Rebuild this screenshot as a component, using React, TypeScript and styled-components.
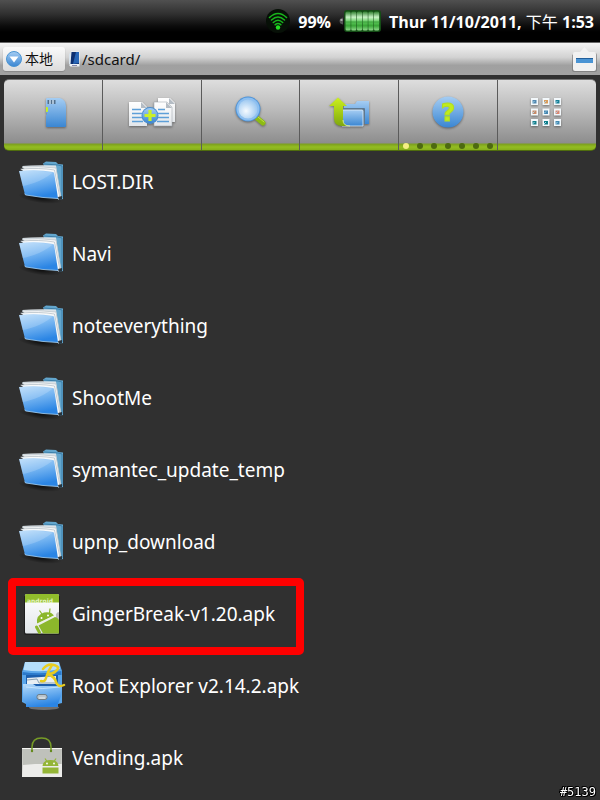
import React from "react";
import styled, { createGlobalStyle } from "styled-components";

const GlobalStyle = createGlobalStyle`
  * { box-sizing: border-box; }
  body {
    margin: 0;
    background: #303030;
    color: #fff;
    font-family: "Noto Sans", "Noto Sans CJK TC", sans-serif;
  }
  button { font: inherit; color: inherit; border: 0; padding: 0; background: none; cursor: pointer; }
`;

const Screen = styled.main`
  min-height: 100vh;
  display: flex;
  flex-direction: column;
  background: #303030;
`;

const StatusBar = styled.header`
  height: 42px;
  padding: 2px 6px 0 0;
  display: flex;
  align-items: center;
  justify-content: flex-end;
  gap: 8px;
  background: linear-gradient(#505050 0, #303030 14px, #0c0c0c 26px, #000 32px);
  font-family: "Open Sans", "Noto Sans CJK TC", sans-serif;
  font-size: 16px;
  font-weight: 700;
  line-height: 24px;
  white-space: nowrap;
  svg { display: block; flex: none; margin-bottom: 2px; }
`;

const Thin = styled.span`
  font-weight: 400;
`;

const PathBar = styled.nav`
  height: 33px;
  padding: 0 3px;
  display: flex;
  align-items: center;
  gap: 3px;
  border-top: 1px solid #666;
  background: linear-gradient(#f4f4f4, #d2d2d2 45%, #a0a0a0 70%, #a2a2a2);
  color: #111;
`;

const LocalButton = styled.button`
  && {
    width: 62px;
    height: 24px;
    padding: 0 3px;
    display: flex;
    align-items: center;
    gap: 3px;
    border-radius: 3px;
    background: linear-gradient(#fafafa, #dcdcdc);
    box-shadow: 0 1px 1px #888;
    font-size: 14px;
    line-height: 20px;
    white-space: nowrap;
  }
  svg { flex: none; }
`;

const CurrentPath = styled.span`
  flex: 1;
  display: flex;
  align-items: center;
  gap: 1px;
  font-size: 15px;
  line-height: 24px;
`;

const CollapseButton = styled.button`
  height: 26px;
  svg { display: block; }
`;

const Toolbar = styled.nav`
  position: relative;
  z-index: 1;
  margin: 4px 4px 0;
  height: 72px;
  display: flex;
  border-radius: 5px;
  overflow: hidden;
  border-top: 1px solid #777;
  border-bottom: 1px solid #4f6d0d;
  background: linear-gradient(#dedede, #b8b8b8 45%, #8d8d8d 63px, #7c9f1f 64px, #93bd22 67px, #86ad1b);
`;

const Tool = styled.button`
  && {
    flex: 1;
    min-width: 0;
    display: flex;
    flex-direction: column;
    align-items: center;
    justify-content: space-between;
    padding-top: 8px;
    border-right: 1px solid #5b5b5b;
  }
  &&:last-child { border-right: 0; }
  svg { display: block; filter: drop-shadow(0 1px 1px rgba(0, 0, 0, 0.4)); }
`;

const Dots = styled.span`
  display: flex;
  align-self: stretch;
  justify-content: space-between;
  padding: 0 4px;
`;

const Dot = styled.span<{ $on?: boolean }>`
  width: 6px;
  height: 6px;
  margin-bottom: 1px;
  border-radius: 50%;
  background: ${(p) => (p.$on ? "#f5ee84" : "#4d6a10")};
`;

const FileList = styled.ul`
  list-style: none;
  margin: -5px 0 0;
  padding: 0;
`;

const FileItem = styled.li`
  position: relative;
  height: 72px;
`;

const FileButton = styled.button`
  && {
    width: 100%;
    height: 100%;
    padding: 0 18px;
    display: flex;
    align-items: center;
    gap: 6px;
    text-align: left;
    font-size: 19px;
    line-height: 28px;
    font-weight: 400;
  }
  svg { flex: none; display: block; }
`;

const Highlight = styled.span`
  position: absolute;
  top: 0;
  left: 8px;
  width: 296px;
  height: 77px;
  border: 8px solid #fe0000;
  border-radius: 5px;
  pointer-events: none;
  z-index: 1;
`;

const Stamp = styled.small`
  position: fixed;
  right: 4px;
  bottom: 0;
  font-family: "DejaVu Sans Mono", monospace;
  font-size: 12px;
  line-height: 16px;
  text-shadow: 1px 0 #000, -1px 0 #000, 0 1px #000, 0 -1px #000, 1px 1px #000, -1px -1px #000;
`;

const Gradients = () => (
  <svg width="0" height="0" aria-hidden="true" display="block">
    <defs>
      <linearGradient id="blue" x1="0" y1="0" x2="0" y2="1">
        <stop offset="0" stopColor="#a5cdf3" />
        <stop offset="1" stopColor="#3a86d2" />
      </linearGradient>
      <linearGradient id="folder" x1="0" y1="0" x2="0.3" y2="1">
        <stop offset="0" stopColor="#b7dbfa" />
        <stop offset="0.45" stopColor="#79b7f2" />
        <stop offset="1" stopColor="#2b85e4" />
      </linearGradient>
      <linearGradient id="lime" x1="0" y1="0" x2="0" y2="1">
        <stop offset="0" stopColor="#cdf01f" />
        <stop offset="1" stopColor="#7fa80e" />
      </linearGradient>
      <linearGradient id="paper" x1="0" y1="0" x2="0" y2="1">
        <stop offset="0" stopColor="#ffffff" />
        <stop offset="1" stopColor="#e2e6ea" />
      </linearGradient>
      <linearGradient id="cell" x1="0" y1="0" x2="0" y2="1">
        <stop offset="0" stopColor="#2c7d2c" />
        <stop offset="0.3" stopColor="#c8f2c5" />
        <stop offset="0.55" stopColor="#5cc85a" />
        <stop offset="0.75" stopColor="#38a436" />
        <stop offset="1" stopColor="#8fdc8b" />
      </linearGradient>
      <radialGradient id="lens" cx="0.4" cy="0.6" r="0.7">
        <stop offset="0" stopColor="#f6fbff" />
        <stop offset="1" stopColor="#8fc0ee" />
      </radialGradient>
      <radialGradient id="shade">
        <stop offset="0" stopColor="#000" stopOpacity="0.7" />
        <stop offset="1" stopColor="#000" stopOpacity="0" />
      </radialGradient>
    </defs>
  </svg>
);

const WifiIcon = () => (
  <svg width="24" height="24" viewBox="0 0 24 24" fill="none" stroke="#18b51c" strokeWidth="1.6" strokeLinecap="round">
    <circle cx="12" cy="12" r="12" fill="#071007" stroke="none" />
    <path d="M3.5 8.5Q12 .5 20.500 8.500" />
    <path d="M5.500 11Q12 5 18.500 11" />
    <path d="M7.300 13.500Q12 9 16.700 13.500" />
    <path d="M9.200 15.700Q12 13.300 14.800 15.700" />
    <circle cx="12" cy="18.500" r="2.200" fill="#22e022" stroke="none" />
  </svg>
);

const BatteryIcon = () => (
  <svg width="42" height="22" viewBox="0 0 42 22">
    <path d="M4 7.500Q.5 8 .5 11T4 14.500Z" fill="#555" />
    <rect x="1.500" y="9" width="2" height="2" fill="#aaa" />
    <rect x="5" y="0" width="37" height="22" rx="3" fill="#154d16" />
    {[0, 1, 2, 3, 4, 5].map((i) => (
      <rect key={i} x={6.5 + i * 5.7} y="1.500" width="5.200" height="19" rx="1.500" fill="url(#cell)" />
    ))}
    <path d="M6 12h35" stroke="#2a882a" strokeWidth="1.500" opacity=".4" />
  </svg>
);

const DownIcon = () => (
  <svg width="16" height="16" viewBox="0 0 16 16">
    <circle cx="8" cy="8" r="7.500" fill="url(#blue)" stroke="#4b94d2" />
    <path d="M3.500 5.500h9L8 11.500Z" fill="#fff" />
  </svg>
);

const PhoneIcon = () => (
  <svg width="13" height="16" viewBox="0 0 13 16">
    <path d="M1 3 3 1v13l-2-1Z" fill="#d8e3ed" />
    <path d="M3 .5h8q.5 0 .5.5v14q0 .5-.5.5H2.500L1 14l1.500-1Z" fill="#eef3f7" />
    <path d="M3.500 1H11v12H2.500Z" fill="#0c2f70" />
    <path d="M8 1h3v11L5 13Z" fill="#2865b5" />
    <path d="M4 14.500h5" stroke="#88a" />
  </svg>
);

const CollapseIcon = () => (
  <svg width="25" height="26" viewBox="0 0 25 26">
    <path d="M3 7h20q2 0 2 2v15q0 2-2 2H3q-3 0-3-2V9Z" fill="#6f6f6f" opacity=".6" />
    <path d="M3 6h5l4.500-5L17 6h5q2 0 2 2v15q0 2-2 2H3q-2 0-2-2V8q0-2 2-2Z" fill="#f1f1f1" />
    <rect x="4" y="12" width="17" height="5" fill="#4a94d4" />
    <path d="M4 12.500h17" stroke="#225f9a" />
  </svg>
);

const SdIcon = () => (
  <svg width="48" height="48" viewBox="0 0 48 48">
    <path d="M18 10h13q6 2 6 8v20q0 1-1 1H18q-1 0-1-1V27l1-1-1-2V11q0-1 1-1Z" fill="url(#blue)" />
    <path d="M19.500 12v4M22.500 12v4M25.500 12v4" stroke="#53708c" strokeWidth="2" />
    <path d="M21 12v4M24 12v4" stroke="#e0e8ef" strokeWidth="1" />
    <path d="M17 19h1q1 0 1 1v3q0 1-1 1h-1Z" fill="#c4ee26" />
  </svg>
);

const CopyIcon = () => (
  <svg width="48" height="48" viewBox="0 0 48 48">
    <path d="M30 10h12l5 5v19H30Z" fill="url(#paper)" />
    <path d="M41 10v6h6Z" fill="#b4bcc4" />
    <path d="M1 14h13l5 5v19H1Z" fill="url(#paper)" />
    <path d="M13 14v6h6Z" fill="#b4bcc4" />
    <path d="M26 14h13l5 5v19H26Z" fill="url(#paper)" stroke="#a6acb2" strokeWidth=".6" />
    <path d="M38 14v6h6Z" fill="#b4bcc4" />
    <path d="M4 21.500h9M4 25.500h10M4 29.500h10M4 33.500h11M30 21.500h7M29 25.500h12M29 29.500h12M29 33.500h12" stroke="#5d9fd8" strokeWidth="1.500" />
    <circle cx="22" cy="27.500" r="8.500" fill="#4c90cf" />
    <circle cx="22" cy="27.500" r="7.500" fill="url(#blue)" />
    <path d="M22 22v11M16.500 27.500h11" stroke="#caf029" strokeWidth="3.200" />
  </svg>
);

const SearchIcon = () => (
  <svg width="48" height="48" viewBox="0 0 48 48">
    <path d="m30 30 6 5" stroke="#8dbb13" strokeWidth="5" strokeLinecap="round" />
    <path d="m31 29 6 5" stroke="#c0e240" strokeWidth="1" strokeLinecap="round" />
    <circle cx="21" cy="21" r="12.500" fill="#4f96dc" />
    <circle cx="21" cy="21" r="11.500" fill="#8dbff0" />
    <circle cx="21" cy="21" r="9.500" fill="url(#lens)" />
  </svg>
);

const UpIcon = () => (
  <svg width="48" height="48" viewBox="0 0 48 48">
    <path d="M19 16h11l2-3h12v23H19Z" fill="url(#blue)" />
    <path d="M18 20h21q1 0 1 1v15H18Z" fill="#5e7890" />
    <path d="M17 22h20q1 0 1 1v15H17Z" fill="url(#blue)" stroke="#e1effb" strokeWidth=".8" />
    <path d="M13 9.500 22 18h-4v14q0 6 7 6H17q-8 0-8-8V18H4Z" fill="url(#lime)" />
    <path d="M18 32q0 6 7 6" fill="none" stroke="#eafa92" strokeWidth=".8" />
  </svg>
);

const HelpIcon = () => (
  <svg width="48" height="48" viewBox="0 0 48 48">
    <circle cx="24" cy="24" r="15.500" fill="url(#blue)" />
    <text x="24" y="33" textAnchor="middle" fontFamily="DejaVu Sans" fontWeight="700" fontSize="25" fill="#c0ec1c" stroke="#b2dc22" strokeWidth="1">?</text>
  </svg>
);

const tileColors = ["#5287b0", "#d99b5b", "#168097", "#c88a68", "#4686b0", "#d98773", "#15808b", "#0b7c88", "#4489b2"];

const AppsIcon = () => (
  <svg width="48" height="48" viewBox="0 0 48 48">
    {tileColors.map((color, i) => {
      const x = 8 + (i % 3) * 11.5;
      const y = 10 + Math.floor(i / 3) * 10.5;
      return (
        <g key={i}>
          <rect x={x} y={y} width="7" height="7" fill="#f3f8fb" />
          <rect x={x + 1.5} y={y + 2} width="4" height="3.500" fill={color} />
          <path d={`M${x + 1.5} ${y + 5}l2-2`} stroke="#a9d8ed" />
        </g>
      );
    })}
  </svg>
);

const FolderIcon = () => (
  <svg width="48" height="48" viewBox="0 0 48 48">
    <ellipse cx="22" cy="40" rx="22" ry="5" fill="url(#shade)" transform="rotate(8 22 40)" />
    <path d="M25 5.500 28 3.500 38 4l2 2 5 .5V41l-4 1Z" fill="#63a6cd" />
    <path d="M26 6l14 1 4 1v32" fill="none" stroke="#3c7fa9" />
    <path d="M4 8q12-1 34-.500L43 39l-2 3Z" fill="#dce3e8" />
    <path d="M4 9q16-1 34 1L43 40l-2 1Z" fill="#f9fafb" stroke="#adb8c0" strokeWidth=".6" />
    <path d="M2.500 11Q22 9.500 36.500 12L42 40" fill="#f7f9fa" stroke="#a5b0b8" strokeWidth=".6" />
    <path d="M1 13Q20 11 35 14 36 14 36.200 15.500L40 40.500Q24 40 8 37 7 37 6.700 35.500Z" fill="url(#folder)" />
    <path d="M1.500 13.500Q20 11.500 35 14.500 25 22 16 25T4.500 28Z" fill="#fff" opacity=".18" />
    <path d="M6.800 35.500Q7 37 8 37 24 40 40 40.500" fill="none" stroke="#a7d5fb" strokeWidth=".8" />
    <path d="m40 39 4-1v3.500l-3 .5Z" fill="#27333c" />
  </svg>
);

const ApkIcon = () => (
  <svg width="48" height="48" viewBox="0 0 48 48">
    <rect x="6" y="5" width="36" height="40" rx="2" fill="#000" opacity=".35" />
    <rect x="7" y="4" width="34" height="39.500" rx="1.500" fill="url(#paper)" />
    <path d="M7 12.500V5.500Q7 4 8.500 4h31Q41 4 41 5.500v7Z" fill="#91bd2c" />
    <text x="22" y="13" textAnchor="middle" fontFamily="DejaVu Sans" fontSize="6" fontWeight="700" fill="#e5f5c4">android</text>
    <path d="m38 24 2-2q1 0 1 1v8l-3-2Z" fill="#bbb" />
    <path d="M19 33.500Q18 25 26 22.500 33 21 36 25.500Z" fill="#8cb72b" />
    <path d="m21.500 20.500 2.500 3.500m8-5.500-.5 4.500" stroke="#8cb72b" strokeWidth="1.200" />
    <path d="M20.500 35.500 37 27q2 0 4 3v13.500H25Z" fill="#8cb72b" />
    <path d="m18.500 37 3 5.500" stroke="#8cb72b" strokeWidth="3" strokeLinecap="round" />
    <path d="m19 34.500 17-8.500" stroke="#eef5df" />
    <circle cx="23.500" cy="28" r="1" fill="#fff" />
    <circle cx="30" cy="25.500" r="1" fill="#fff" />
  </svg>
);

const RootExplorerIcon = () => (
  <svg width="48" height="48" viewBox="0 0 48 48">
    <ellipse cx="26" cy="45.500" rx="15" ry="2.500" fill="#999" opacity=".6" />
    <path d="M7 0h34l3 9v32l-4 1v3H8v-3l-4-2V10Z" fill="#5aa6ea" />
    <path d="M7 0h34l1 7Q24 11 5.500 8Z" fill="#b5defa" />
    <path d="M4.500 10Q24 13 43.500 9v4h-39Z" fill="#2b79ca" />
    <path d="M8 13h32v11H8Z" fill="#1c5fae" />
    <path d="M9 16 38 14v8H9Z" fill="#e8eef3" />
    <path d="M9 18 19 17l2 4h18" fill="none" stroke="#8da3b4" />
    <path d="M5 22h10l3 2h26l-1 10-3 8v3H8v-4L5 38Z" fill="url(#folder)" />
    <path d="M8 25Q24 28 42 25" fill="none" stroke="#d0eaff" strokeWidth=".8" />
    <rect x="19" y="32.500" width="10" height="5" rx="2" fill="#b9c4cc" stroke="#6d7d88" />
    <path d="M21 36h6" stroke="#e6edf1" strokeWidth="1" />
    <path d="M25 7Q30 1 36 3 43 5 38 9 35 12 30 12 37 15 38 20 40 26 46 23M34 3Q30 9 28 16 27 20 23 19" fill="none" stroke="#e8cd20" strokeWidth="2.500" strokeLinecap="round" />
  </svg>
);

const MarketIcon = () => (
  <svg width="48" height="48" viewBox="0 0 48 48">
    <path d="M4 14h40v29H4Z" fill="#cfd0cb" />
    <path d="M4 14h40l-1 17H5Z" fill="#bfc1bb" />
    <path d="m5 31 12-1h27v13H4Z" fill="#ececea" />
    <path d="M4 14.500h40" stroke="#f4f4f2" />
    <path d="M14 17V13Q14 4 23.500 4T33 13v4" fill="none" stroke="#779c27" strokeWidth="1.500" />
    <circle cx="14" cy="17" r="1.200" fill="#64891c" /><circle cx="33" cy="17" r="1.200" fill="#64891c" />
    <path d="M24.500 32Q25 26 32.500 26T40.500 32ZM24.500 33.500h16v6h-16Z" fill="#94b536" />
    <path d="m27 24.500 2 3m9-3-2 3" stroke="#94b536" strokeWidth="1.200" />
    <circle cx="29" cy="29.500" r=".9" fill="#fff" /><circle cx="36" cy="29.500" r=".9" fill="#fff" />
  </svg>
);

const tools = [
  { label: "SD card", Icon: SdIcon },
  { label: "New", Icon: CopyIcon },
  { label: "Search", Icon: SearchIcon },
  { label: "Up", Icon: UpIcon },
  { label: "Help", Icon: HelpIcon, dots: 7 },
  { label: "Apps", Icon: AppsIcon },
];

const files = [
  { name: "LOST.DIR", Icon: FolderIcon },
  { name: "Navi", Icon: FolderIcon },
  { name: "noteeverything", Icon: FolderIcon },
  { name: "ShootMe", Icon: FolderIcon },
  { name: "symantec_update_temp", Icon: FolderIcon },
  { name: "upnp_download", Icon: FolderIcon },
  { name: "GingerBreak-v1.20.apk", Icon: ApkIcon, highlighted: true },
  { name: "Root Explorer v2.14.2.apk", Icon: RootExplorerIcon },
  { name: "Vending.apk", Icon: MarketIcon },
];

export default function App() {
  return (
    <Screen>
      <GlobalStyle />
      <Gradients />
      <StatusBar>
        <WifiIcon />
        <span>99%</span>
        <BatteryIcon />
        <span>Thur 11/10/2011, <Thin>下午</Thin> 1:53</span>
      </StatusBar>
      <PathBar>
        <LocalButton><DownIcon />本地</LocalButton>
        <CurrentPath><PhoneIcon />/sdcard/</CurrentPath>
        <CollapseButton aria-label="Collapse"><CollapseIcon /></CollapseButton>
      </PathBar>
      <Toolbar>
        {tools.map(({ label, Icon, dots }) => (
          <Tool key={label} aria-label={label}>
            <Icon />
            {dots && (
              <Dots>
                {Array.from({ length: dots }, (_, i) => <Dot key={i} $on={i === 0} />)}
              </Dots>
            )}
          </Tool>
        ))}
      </Toolbar>
      <FileList>
        {files.map(({ name, Icon, highlighted }) => (
          <FileItem key={name}>
            <FileButton><Icon />{name}</FileButton>
            {highlighted && <Highlight />}
          </FileItem>
        ))}
      </FileList>
      <Stamp>#5139</Stamp>
    </Screen>
  );
}
